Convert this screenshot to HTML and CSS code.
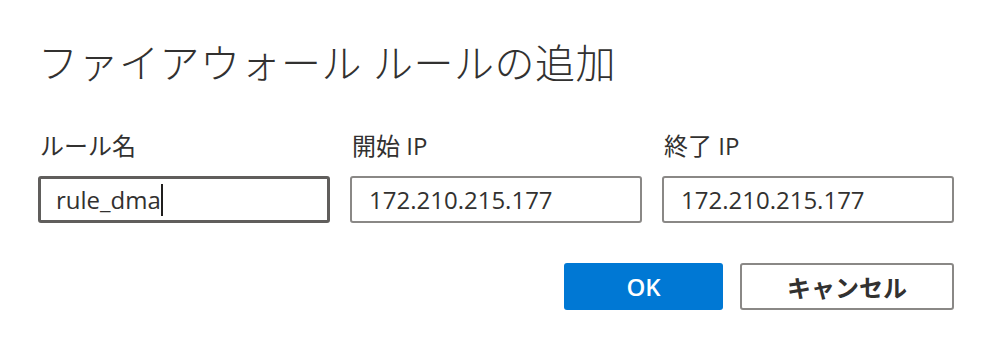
FILE: index.html
```html
<!DOCTYPE html>
<html>
  <head>
    <meta charset="utf-8">
    <title>ファイアウォール ルールの追加</title>
    <link rel="stylesheet" href="styles.css">
  </head>
  <body>
    <section class="dialog">
      <h1 class="title">ファイアウォール ルールの追加</h1>

      <div class="fields">
        <label class="field">
          <span class="label">ルール名</span>
          <span class="input focused">rule_dma<span class="caret"></span></span>
        </label>
        <label class="field">
          <span class="label">開始 IP</span>
          <span class="input">172.210.215.177</span>
        </label>
        <label class="field">
          <span class="label">終了 IP</span>
          <span class="input">172.210.215.177</span>
        </label>
      </div>

      <div class="actions">
        <button class="btn primary">OK</button>
        <button class="btn secondary">キャンセル</button>
      </div>
    </section>
  </body>
</html>
```

FILE: styles.css
```css
/* General styles */

html {
  background-color: white;
  font-family: "Open Sans", "Noto Sans CJK JP", sans-serif;
  color: #323130;
}

body {
  margin: 0;
}

* {
  box-sizing: border-box;
}

/* Dialog layout */

.dialog {
  width: 954px;
  padding: 35px 0 0 38px;
}

.title {
  margin: 0;
  font-size: 40px;
  font-weight: 300;
  line-height: 56px;
  letter-spacing: 0.5px;
}

.fields {
  display: grid;
  grid-template-columns: repeat(3, 1fr);
  gap: 20px;
  margin-top: 39px;
}

.field {
  display: flex;
  flex-direction: column;
  gap: 14px;
}

.label {
  font-size: 24px;
  line-height: 32px;
  padding-left: 2px;
}

.input {
  display: flex;
  align-items: center;
  height: 47px;
  padding: 0 16px 0 17px;
  border: 2px solid #8a8886;
  border-radius: 3px;
  font-size: 24px;
}

.input.focused {
  border: 3px solid #605e5c;
  padding-left: 15px;
}

.caret {
  display: inline-block;
  width: 2px;
  height: 32px;
  background-color: #201f1e;
}

/* Buttons */

.actions {
  display: flex;
  justify-content: flex-end;
  gap: 17px;
  margin-top: 40px;
}

.btn {
  height: 47px;
  border-radius: 3px;
  font-family: inherit;
  font-size: 24px;
  font-weight: 700;
  cursor: pointer;
}

.primary {
  width: 159px;
  border: 0;
  background-color: #0078d4;
  color: white;
  font-weight: 600;
}

.secondary {
  width: 214px;
  border: 2px solid #8a8886;
  background-color: white;
  color: #323130;
}
```
